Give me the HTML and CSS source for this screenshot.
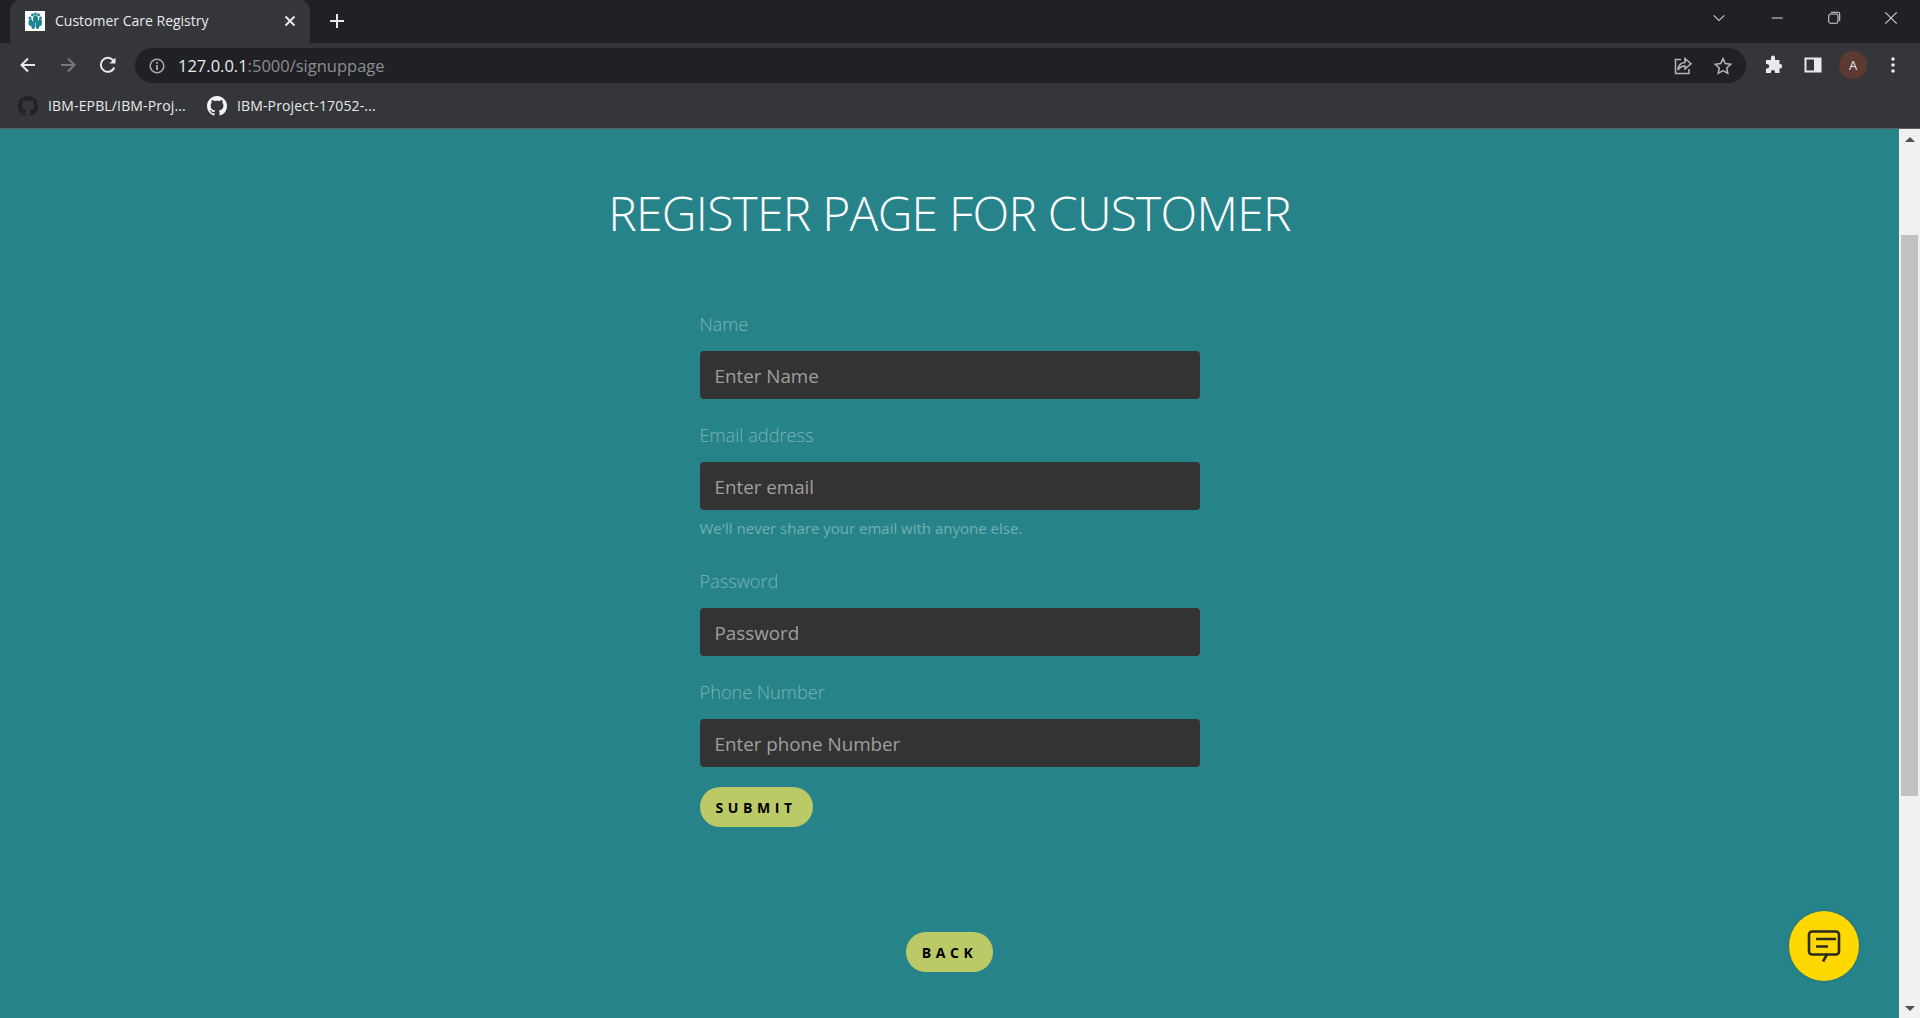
FILE: index.html
```html
<!DOCTYPE html>
<html lang="en">
<head>
    <meta charset="UTF-8">
    <meta name="viewport" content="width=device-width, initial-scale=1.0">
    <title>Customer Care Registry</title>
    <link rel="stylesheet" href="styles.css">
</head>
<body>
    <header class="browser">
        <div class="tabstrip">
            <div class="tab">
                <svg class="favicon" viewBox="0 0 20 20">
                    <rect width="20" height="20" fill="#fff"/>
                    <g fill="#1f8496">
                        <circle cx="7.500" cy="3.800" r="1.500"/>
                        <circle cx="10.500" cy="2.800" r="1.400"/>
                        <circle cx="13.500" cy="3.800" r="1.500"/>
                        <circle cx="5" cy="7" r="1.500"/>
                        <circle cx="15.500" cy="7" r="1.500"/>
                        <ellipse cx="10.500" cy="8" rx="2.500" ry="3.800"/>
                        <ellipse cx="5.500" cy="11.500" rx="2" ry="3.500"/>
                        <ellipse cx="15" cy="11.500" rx="2" ry="3.500"/>
                        <ellipse cx="8.200" cy="14" rx="2" ry="4"/>
                        <ellipse cx="12.500" cy="14" rx="2" ry="4"/>
                    </g>
                </svg>
                <span class="tab-title">Customer Care Registry</span>
                <svg class="tab-close" viewBox="0 0 16 16"><path d="M3.500 3.500l9 9M12.500 3.500l-9 9"/></svg>
            </div>
            <div class="new-tab">
                <svg viewBox="0 0 16 16"><path d="M8 1v14M1 8h14"/></svg>
            </div>
            <div class="window-controls">
                <div class="win-btn"><svg viewBox="0 0 16 16"><path d="M2 5l6 6 6-6"/></svg></div>
                <div class="win-btn"><svg viewBox="0 0 16 16"><path d="M2 8h12.500"/></svg></div>
                <div class="win-btn"><svg viewBox="0 0 16 16"><rect x="2" y="3.500" width="10.500" height="10.500" rx="2"/><path d="M4.500 1.500h8a2 2 0 012 2v8"/></svg></div>
                <div class="win-btn"><svg viewBox="0 0 16 16"><path d="M1.500 1.500l13 13M14.500 1.500l-13 13"/></svg></div>
            </div>
        </div>

        <div class="toolbar">
            <div class="tool-btn"><svg viewBox="0 0 20 20"><path class="line" d="M17 10H4M10 3.500L3.500 10l6.500 6.500"/></svg></div>
            <div class="tool-btn dim"><svg viewBox="0 0 20 20"><path class="line" d="M3 10h13M10 3.500l6.500 6.500-6.500 6.500"/></svg></div>
            <div class="tool-btn"><svg viewBox="0 0 20 20"><path class="line" d="M16.300 12.500a7 7 0 11-.9-6.900"/><path class="solid" d="M17.500 2.500v6h-6z"/></svg></div>
            <div class="omnibox">
                <svg class="info" viewBox="0 0 20 20"><circle class="line" cx="10" cy="10" r="6.800"/><path class="solid" d="M9.100 9h1.800v5H9.100zM9.100 6h1.800v1.800H9.100z"/></svg>
                <span class="url"><span class="host">127.0.0.1</span>:5000/signuppage</span>
                <div class="tool-btn soft"><svg viewBox="0 0 20 20"><path class="line" d="M8 3.500H2.500v14h13.500V13"/><path class="line" d="M12 2.500l6 5.200-6 5.200V10C8.500 10 6.500 11.500 5 14c.2-4.500 2.800-7.200 7-7.500z"/></svg></div>
                <div class="tool-btn soft"><svg viewBox="0 0 20 20"><path class="line" d="M10 2.600l2.300 5 5.400.6-4 3.700 1.100 5.400L10 14.600l-4.800 2.700 1.100-5.400-4-3.700 5.400-.6z"/></svg></div>
            </div>
            <div class="tool-btn"><svg viewBox="0 0 20 20"><path class="solid" d="M8 2.500a2 2 0 014 0V5h4.500v4H17a2.200 2.200 0 010 4.400h-.5V18h-4.500v-1a2 2 0 00-4 0v1H3v-4.500h1a2.200 2.200 0 000-4.400H3V5h5z"/></svg></div>
            <div class="tool-btn"><svg viewBox="0 0 20 20"><path class="solid" fill-rule="evenodd" d="M1.500 2.500h17v15h-17zM3.500 4.500v11H11v-11z"/></svg></div>
            <div class="tool-btn"><span class="avatar">A</span></div>
            <div class="tool-btn"><svg viewBox="0 0 20 20"><circle class="solid" cx="10" cy="4" r="1.800"/><circle class="solid" cx="10" cy="10" r="1.800"/><circle class="solid" cx="10" cy="16" r="1.800"/></svg></div>
        </div>

        <div class="bookmarks">
            <div class="bookmark">
                <svg class="gh gh-dark" viewBox="0 0 16 16"><path d="M8 0C3.580 0 0 3.580 0 8c0 3.540 2.290 6.530 5.470 7.590.4.070.55-.17.55-.38 0-.19-.01-.82-.01-1.490-2.010.37-2.530-.49-2.690-.94-.09-.23-.48-.94-.82-1.130-.28-.15-.68-.52-.01-.53.63-.01 1.080.58 1.230.82.72 1.210 1.870.87 2.330.66.07-.52.28-.87.51-1.070-1.780-.2-3.640-.89-3.640-3.950 0-.87.31-1.590.82-2.150-.08-.2-.36-1.020.08-2.120 0 0 .67-.21 2.200.82.64-.18 1.320-.27 2-.27.68 0 1.360.09 2 .27 1.530-1.040 2.200-.82 2.200-.82.44 1.100.16 1.920.08 2.120.51.56.82 1.270.82 2.150 0 3.070-1.870 3.750-3.650 3.950.29.25.54.73.54 1.480 0 1.070-.01 1.930-.01 2.200 0 .21.15.46.55.38A8.013 8.013 0 0016 8c0-4.420-3.580-8-8-8z"/></svg>
                <span>IBM-EPBL/IBM-Proj...</span>
            </div>
            <div class="bookmark">
                <svg class="gh" viewBox="0 0 16 16"><path d="M8 0C3.580 0 0 3.580 0 8c0 3.540 2.290 6.530 5.470 7.590.4.070.55-.17.55-.38 0-.19-.01-.82-.01-1.490-2.010.37-2.530-.49-2.690-.94-.09-.23-.48-.94-.82-1.130-.28-.15-.68-.52-.01-.53.63-.01 1.080.58 1.230.82.72 1.210 1.870.87 2.330.66.07-.52.28-.87.51-1.070-1.780-.2-3.640-.89-3.640-3.950 0-.87.31-1.590.82-2.150-.08-.2-.36-1.020.08-2.120 0 0 .67-.21 2.200.82.64-.18 1.320-.27 2-.27.68 0 1.360.09 2 .27 1.530-1.040 2.200-.82 2.200-.82.44 1.100.16 1.920.08 2.120.51.56.82 1.270.82 2.150 0 3.070-1.870 3.750-3.650 3.950.29.25.54.73.54 1.480 0 1.070-.01 1.930-.01 2.200 0 .21.15.46.55.38A8.013 8.013 0 0016 8c0-4.420-3.580-8-8-8z"/></svg>
                <span>IBM-Project-17052-...</span>
            </div>
        </div>
    </header>

    <div class="viewport">
        <main class="page">
            <h1>REGISTER PAGE FOR CUSTOMER</h1>
            <form class="register-form">
                <div class="form-group">
                    <label for="name">Name</label>
                    <input type="text" id="name" placeholder="Enter Name">
                </div>
                <div class="form-group">
                    <label for="email">Email address</label>
                    <input type="email" id="email" placeholder="Enter email">
                    <small>We'll never share your email with anyone else.</small>
                </div>
                <div class="form-group">
                    <label for="password">Password</label>
                    <input type="password" id="password" placeholder="Password">
                </div>
                <div class="form-group last">
                    <label for="phone">Phone Number</label>
                    <input type="text" id="phone" placeholder="Enter phone Number">
                </div>
                <button type="button" class="pill">SUBMIT</button>
            </form>
            <div class="back-row">
                <button type="button" class="pill">BACK</button>
            </div>
            <div class="chat-fab">
                <svg viewBox="0 0 40 40"><path d="M8 5.500h24a3 3 0 013 3v17a3 3 0 01-3 3H23l-4 7"/><path d="M23 28.500H8a3 3 0 01-3-3v-17a3 3 0 013-3"/><path d="M12 13h20M12 20.500h12"/></svg>
            </div>
        </main>
        <div class="scrollbar">
            <div class="arrow up"></div>
            <div class="thumb"></div>
            <div class="arrow down"></div>
        </div>
    </div>
</body>
</html>
```

FILE: styles.css
```css
* {
    box-sizing: border-box;
}
body {
    margin: 0;
    height: 100vh;
    display: flex;
    flex-direction: column;
    overflow: hidden;
    font-family: "Open Sans", "Noto Sans", sans-serif;
    background-color: #27838a;
}

/* browser chrome */
.browser {
    flex: none;
    background-color: #35363a;
    color: #e8eaed;
    border-bottom: 1px solid #5f6063;
}
.tabstrip {
    height: 43px;
    display: flex;
    align-items: stretch;
    padding-left: 10px;
    background-color: #202124;
}
.tab {
    width: 300px;
    display: flex;
    align-items: center;
    padding: 0 12px 0 15px;
    background-color: #35363a;
    border-radius: 10px 10px 0 0;
}
.favicon {
    width: 20px;
    height: 20px;
    flex: none;
    margin-top: -1px;
}
.tab-title {
    flex: 1;
    margin-left: 10px;
    font-size: 14px;
    white-space: nowrap;
    margin-top: -2px;
}
.tab-close {
    width: 16px;
    height: 16px;
    fill: none;
    stroke: #e8eaed;
    stroke-width: 2;
    margin-top: -1px;
}
.new-tab {
    width: 34px;
    margin-left: 10px;
    display: flex;
    align-items: center;
    justify-content: center;
}
.new-tab svg {
    width: 16px;
    height: 16px;
    fill: none;
    stroke: #e8eaed;
    stroke-width: 2;
    margin-top: -1px;
}
.window-controls {
    margin-left: auto;
    display: flex;
    align-items: flex-start;
}
.win-btn {
    width: 57.33px;
    height: 36px;
    display: flex;
    align-items: center;
    justify-content: center;
}
.win-btn svg {
    width: 14px;
    height: 14px;
    fill: none;
    stroke: #d5d6d8;
    stroke-width: 1.2;
}

.toolbar {
    height: 45px;
    display: flex;
    align-items: flex-start;
    padding: 2px 7px 0 7.5px;
}
.tool-btn {
    width: 40px;
    height: 40px;
    flex: none;
    display: flex;
    align-items: center;
    justify-content: center;
}
.tool-btn svg {
    width: 20px;
    height: 20px;
}
.line {
    fill: none;
    stroke: #e8eaed;
    stroke-width: 2;
}
.solid {
    fill: #e8eaed;
}
.dim .line {
    stroke: #77787b;
}
.soft .line {
    stroke: #b5b6b8;
    stroke-width: 1.5;
}
.omnibox {
    flex: 1;
    height: 35px;
    margin: 3px 7.5px 0 7.5px;
    padding: 0 3px 0 12px;
    display: flex;
    align-items: center;
    background-color: #202124;
    border-radius: 18px;
}
.info {
    width: 20px;
    height: 20px;
    flex: none;
}
.info .line {
    stroke: #a8a9ac;
    stroke-width: 1.6;
}
.info .solid {
    fill: #a8a9ac;
}
.url {
    flex: 1;
    margin-left: 11px;
    font-size: 16.5px;
    color: #8d8e91;
}
.host {
    color: #e8eaed;
}
.avatar {
    width: 28px;
    height: 28px;
    display: flex;
    align-items: center;
    justify-content: center;
    border-radius: 50%;
    background-color: #5c3a31;
    font-size: 13px;
}
.bookmarks {
    height: 40px;
    display: flex;
    align-items: center;
    padding: 0 0 4px 18px;
}
.bookmark {
    display: flex;
    align-items: center;
    margin-right: 21px;
    font-size: 14px;
}
.bookmark span {
    margin-left: 10px;
    margin-top: -2px;
    letter-spacing: 0.15px;
}
.gh {
    width: 20px;
    height: 20px;
    fill: #f1f3f4;
}
.gh-dark {
    fill: #202124;
}

/* page */
.viewport {
    flex: 1;
    display: flex;
    min-height: 0;
}
.page {
    flex: 1;
    position: relative;
    padding-top: 52px;
    color: #fff;
    background-color: #27838a;
}
h1 {
    margin: 0 0 66px;
    text-align: center;
    font-size: 48px;
    line-height: 64px;
    font-weight: 300;
    letter-spacing: -0.75px;
    color: #fff;
}
.register-form {
    width: 500px;
    margin: 0 auto;
}
.form-group {
    margin-bottom: 23px;
}
.form-group.last {
    margin-bottom: 20px;
}
label {
    display: block;
    height: 27px;
    line-height: 27px;
    margin-bottom: 13px;
    font-size: 18.2px;
    font-weight: 300;
    color: #7ab3b3;
}
input {
    display: block;
    width: 100%;
    height: 48px;
    padding: 2px 15px 0;
    border: none;
    border-radius: 4px;
    background-color: #333;
    font-family: inherit;
    font-size: 18.8px;
    color: #ddd;
}
input::placeholder {
    color: #a09f9f;
    opacity: 1;
}
small {
    display: block;
    margin-top: 7px;
    height: 28px;
    font-size: 15px;
    line-height: 22px;
    color: #72b0b0;
}
.pill {
    display: block;
    height: 40px;
    padding: 0 16px;
    border: none;
    border-radius: 20px;
    background-color: #bbc966;
    font-family: inherit;
    font-size: 14px;
    font-weight: 700;
    letter-spacing: 4.6px;
    color: #000;
}
.back-row {
    display: flex;
    justify-content: center;
    margin-top: 105px;
}
.chat-fab {
    position: absolute;
    right: 40px;
    bottom: 37px;
    width: 70px;
    height: 70px;
    display: flex;
    align-items: center;
    justify-content: center;
    border-radius: 50%;
    background-color: #ffd800;
    box-shadow: 0 0 3px rgba(0, 0, 0, 0.2);
}
.chat-fab svg {
    width: 40px;
    height: 40px;
    fill: none;
    stroke: #2a2a22;
    stroke-width: 2.6;
}

/* scrollbar */
.scrollbar {
    width: 21px;
    flex: none;
    display: flex;
    flex-direction: column;
    align-items: center;
    background-color: #f1f1f1;
}
.arrow {
    width: 0;
    height: 0;
    border-left: 5px solid transparent;
    border-right: 5px solid transparent;
}
.arrow.up {
    margin-top: 8px;
    border-bottom: 5px solid #505050;
}
.arrow.down {
    margin-top: auto;
    margin-bottom: 7px;
    border-top: 5px solid #505050;
}
.thumb {
    width: 17px;
    height: 561px;
    margin-top: 93px;
    background-color: #c1c1c1;
}
```
